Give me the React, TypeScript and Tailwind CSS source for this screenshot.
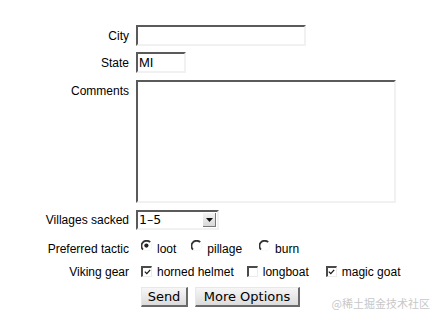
import React from 'react';

const inset =
  'bg-white border-t-2 border-l-2 border-r-2 border-b-2 border-t-[#5a5a5a] border-l-[#5a5a5a] border-r-[#f1f1f1] border-b-[#f1f1f1] outline-none';

const Label: React.FC<{ children: React.ReactNode; className?: string }> = ({ children, className = '' }) => (
  <div className={`w-[130px] shrink-0 text-right pr-[1px] ${className}`}>{children}</div>
);

const Radio: React.FC<{ checked?: boolean; label: string; className?: string }> = ({ checked, label, className = '' }) => (
  <label className={`flex items-center ${className}`}>
    <svg width="11" height="11" viewBox="0 0 11 11" className="mb-[7px] mr-[5px]">
      <path d="M2 9.6 A4.6 4.6 0 0 1 9.2 2.2" fill="none" stroke="#333" strokeWidth="1.8" />
      <path d="M9.2 2.2 A4.6 4.6 0 0 1 2 9.6" fill="none" stroke="#f4f4f4" strokeWidth="1" />
      {checked && <circle cx="5.4" cy="5.6" r="2.1" fill="#222" />}
    </svg>
    <span>{label}</span>
  </label>
);

const Check: React.FC<{ checked?: boolean; label: string; className?: string }> = ({ checked, label, className = '' }) => (
  <label className={`flex items-center ${className}`}>
    <span className="w-[11px] h-[11px] mr-[5px] mb-[1px] border-t-2 border-l-2 border-t-[#4a4a4a] border-l-[#4a4a4a] border-r border-b border-r-[#ececec] border-b-[#ececec] flex items-center justify-center">
      {checked && (
        <svg width="7" height="6" viewBox="0 0 7 6">
          <path d="M0.8 2.6 L2.8 4.6 L6.2 0.8" fill="none" stroke="#111" strokeWidth="1.2" />
        </svg>
      )}
    </span>
    <span>{label}</span>
  </label>
);

const btn =
  "h-[20px] bg-gradient-to-b from-[#f6f6f6] to-[#dcdcdc] border-t border-l border-r-2 border-b-2 border-t-[#e8e8e8] border-l-[#e8e8e8] border-r-[#6a6a6a] border-b-[#6a6a6a] font-['DejaVu_Sans',sans-serif] text-[13px] leading-none text-black";

export default function App() {
  return (
    <div className="relative w-[439px] h-[318px] bg-white text-black font-['Liberation_Sans',Arial,sans-serif] text-[12px] overflow-hidden">
      <form className="flex flex-col pt-[25px]" onSubmit={e => e.preventDefault()}>
        <div className="flex items-center gap-[6px] h-[21px]">
          <Label>City</Label>
          <input className={`${inset} w-[170px] h-[21px]`} />
        </div>

        <div className="flex items-center gap-[6px] h-[21px] mt-[6px]">
          <Label>State</Label>
          <input defaultValue="MI" className={`${inset} w-[50px] h-[21px] px-[1px] text-[13px]`} />
        </div>

        <div className="flex items-start gap-[6px] mt-[7px]">
          <Label className="pt-[2px]">Comments</Label>
          <textarea className={`${inset} w-[260px] h-[123px] resize-none`} />
        </div>

        <div className="flex items-center gap-[6px] h-[20px] mt-[7px]">
          <Label>Villages sacked</Label>
          <div className="relative">
            <select
              defaultValue="1-5"
              className={`${inset} appearance-none w-[83px] h-[20px] pl-[1px] font-['DejaVu_Sans',sans-serif] text-[12.5px] leading-none`}
            >
              <option value="1-5">1–5</option>
              <option value="6-10">6–10</option>
            </select>
            <span className="absolute right-[3px] top-[3px] w-[13px] h-[14px] bg-gradient-to-b from-[#f4f4f4] to-[#d8d8d8] border-r border-b border-[#777] flex items-center justify-center pointer-events-none">
              <svg width="7" height="4" viewBox="0 0 7 4">
                <path d="M0 0 H7 L3.5 4 Z" fill="#111" />
              </svg>
            </span>
          </div>
        </div>

        <div className="flex items-center gap-[6px] h-[18px] mt-[10px]">
          <Label>Preferred tactic</Label>
          <div className="flex items-center pl-[5px]">
            <Radio checked label="loot" className="mr-[15px]" />
            <Radio label="pillage" className="mr-[17px]" />
            <Radio label="burn" />
          </div>
        </div>

        <div className="flex items-center gap-[6px] h-[18px] mt-[5px]">
          <Label>Viking gear</Label>
          <div className="flex items-center pl-[5px]">
            <Check checked label="horned helmet" className="mr-[13px]" />
            <Check label="longboat" className="mr-[17px]" />
            <Check checked label="magic goat" />
          </div>
        </div>

        <div className="flex items-center gap-[7px] mt-[6px] pl-[141px]">
          <button type="submit" className={`${btn} w-[47px]`}>Send</button>
          <button type="button" className={`${btn} w-[105px]`}>More Options</button>
        </div>
      </form>

      <div className="absolute right-[9px] bottom-[7px] text-[11px] text-[#c8c8c8] font-['Noto_Sans_CJK_SC',sans-serif]">
        @稀土掘金技术社区
      </div>
    </div>
  );
}
